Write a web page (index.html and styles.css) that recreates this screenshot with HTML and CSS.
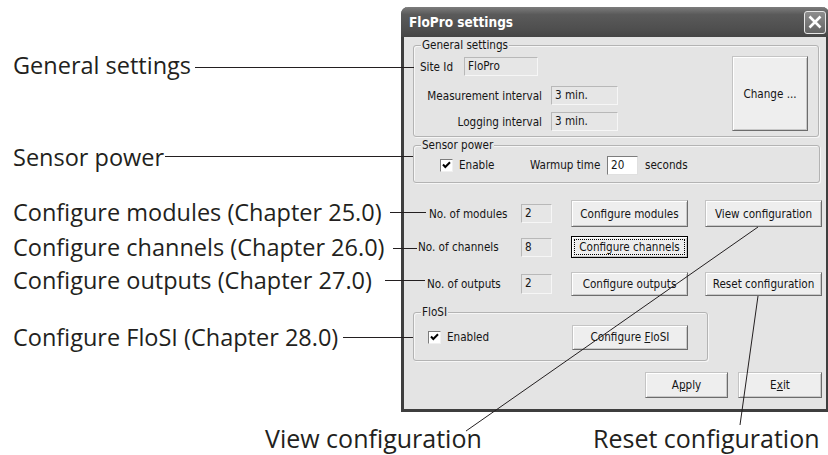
FILE: index.html
```html
<!DOCTYPE html>
<html lang="en">
  <head>
    <meta charset="UTF-8" />
    <title>FloPro settings</title>
    <link rel="stylesheet" href="styles.css">
  </head>
  <body>
    <div class="figure">
      <!-- FloPro settings dialog -->
      <div class="dialog">
        <div class="titlebar">
          <span>FloPro settings</span>
          <span class="close">
            <svg width="16" height="16" viewBox="0 0 16 16">
              <path d="M2.5 2.5 L13.5 13.5 M13.5 2.5 L2.5 13.5" stroke="#fff" stroke-width="2.6" />
            </svg>
          </span>
        </div>

        <div class="content">
          <div class="group general">
            <span class="legend">General settings</span>
            <div class="general-fields">
              <div class="site-row">
                <span class="site-lbl">Site Id</span>
                <span class="field site-field">FloPro</span>
              </div>
              <div class="interval-row first">
                <span class="interval-lbl">Measurement interval</span>
                <span class="field interval-field">3 min.</span>
              </div>
              <div class="interval-row">
                <span class="interval-lbl">Logging interval</span>
                <span class="field interval-field">3 min.</span>
              </div>
            </div>
            <button class="btn change">Change ...</button>
          </div>

          <div class="group sensor">
            <span class="legend">Sensor power</span>
            <span class="check">
              <svg width="13" height="13" viewBox="0 0 13 13">
                <path d="M3 5.5 L5.3 8 L10 3.2" stroke="#000" stroke-width="2" fill="none" />
              </svg>
            </span>
            <span class="enable-lbl">Enable</span>
            <span class="warmup-lbl">Warmup time</span>
            <span class="edit">20</span>
            <span class="seconds">seconds</span>
          </div>

          <div class="row modules">
            <span class="num-lbl">No. of modules</span>
            <span class="field num">2</span>
            <button class="btn cfg">Configure modules</button>
            <button class="btn side">View configuration</button>
          </div>
          <div class="row channels">
            <span class="num-lbl">No. of channels</span>
            <span class="field num">8</span>
            <button class="btn cfg focus"><span class="focus-ring">Configure channels</span></button>
          </div>
          <div class="row outputs">
            <span class="num-lbl">No. of outputs</span>
            <span class="field num">2</span>
            <button class="btn cfg">Configure outputs</button>
            <button class="btn side">Reset configuration</button>
          </div>

          <div class="group flosi">
            <span class="legend">FloSI</span>
            <span class="check">
              <svg width="13" height="13" viewBox="0 0 13 13">
                <path d="M3 5.5 L5.3 8 L10 3.2" stroke="#000" stroke-width="2" fill="none" />
              </svg>
            </span>
            <span class="enabled-lbl">Enabled</span>
            <button class="btn flosi-btn">Configure <u>F</u>loSI</button>
          </div>

          <div class="actions">
            <button class="btn apply">A<u>p</u>ply</button>
            <button class="btn exit">E<u>x</u>it</button>
          </div>
        </div>
      </div>

      <!-- callout leader lines -->
      <svg class="leaders" width="828" height="455">
        <g stroke="#231f20" stroke-width="1" shape-rendering="crispEdges">
          <line x1="195" y1="67.5" x2="414" y2="67.5" />
          <line x1="165" y1="156.5" x2="413" y2="156.5" />
          <line x1="390" y1="212.5" x2="426" y2="212.5" />
          <line x1="393" y1="248.5" x2="417" y2="248.5" />
          <line x1="385" y1="280.5" x2="425" y2="280.5" />
          <line x1="343" y1="337.5" x2="413" y2="337.5" />
        </g>
        <g stroke="#231f20" stroke-width="1">
          <line x1="758" y1="227" x2="466" y2="431" />
          <line x1="758" y1="296" x2="740" y2="425" />
        </g>
      </svg>

      <div class="callout c-general">General settings</div>
      <div class="callout c-sensor">Sensor power</div>
      <div class="callout c-modules">Configure modules (Chapter 25.0)</div>
      <div class="callout c-channels">Configure channels (Chapter 26.0)</div>
      <div class="callout c-outputs">Configure outputs (Chapter 27.0)</div>
      <div class="callout c-flosi">Configure FloSI (Chapter 28.0)</div>
      <div class="callout c-view">View configuration</div>
      <div class="callout c-reset">Reset configuration</div>
    </div>
  </body>
</html>
```

FILE: styles.css
```css
body {
  margin: 0;
  background-color: #fff;
  overflow: hidden;
}
.figure {
  position: relative;
  width: 828px;
  height: 455px;
  overflow: hidden;
}

/* dialog */
.dialog {
  margin: 7px 0 0 401px;
  width: 428px;
  height: 405px;
  box-sizing: border-box;
  border: 3px solid #3e3e3e;
  border-top: 0;
  border-radius: 7px 7px 0 0;
  background-color: #e4e4e4;
  font-family: "DejaVu Sans Condensed", "Liberation Sans", sans-serif;
  font-size: 11.6px;
  color: #151515;
}
.titlebar {
  height: 30px;
  margin: 0 -3px;
  padding: 0 3px 0 8px;
  display: flex;
  align-items: center;
  justify-content: space-between;
  background: linear-gradient(#7c7c7c, #5a5a5a 25%, #4d4d4d 80%, #454545);
  border-radius: 7px 7px 0 0;
  color: #fff;
  font-size: 13.5px;
  font-weight: bold;
}
.close {
  width: 22px;
  height: 23px;
  box-sizing: border-box;
  border: 1px solid #e6e6e6;
  border-radius: 3px;
  background: linear-gradient(#8e8e8e, #646464);
  display: flex;
  align-items: center;
  justify-content: center;
}
.content {
  padding: 8px 0 0 9px;
}

/* group boxes */
.group {
  position: relative;
  box-sizing: border-box;
  border: 1px solid #b3b3b3;
  border-radius: 3px;
  box-shadow: inset 1px 1px 0 #f6f6f6, 1px 1px 0 #f6f6f6;
}
.legend {
  position: absolute;
  top: -8px;
  left: 7px;
  padding: 0 1px;
  line-height: 14px;
  background-color: #e4e4e4;
}

/* fields and buttons */
.field {
  display: inline-block;
  box-sizing: border-box;
  height: 19px;
  line-height: 17px;
  padding-left: 3px;
  border: 1px solid;
  border-color: #b8b8b8 #f6f6f6 #f6f6f6 #b8b8b8;
  background-color: #e6e6e6;
}
.edit {
  display: inline-block;
  box-sizing: border-box;
  width: 31px;
  height: 19px;
  line-height: 17px;
  padding-left: 3px;
  border: 1px solid;
  border-color: #7d7d7d #e0e0e0 #e0e0e0 #7d7d7d;
  background-color: #fff;
}
.btn {
  box-sizing: border-box;
  margin: 0;
  padding: 0;
  font: inherit;
  color: inherit;
  background-color: #eeeeee;
  border: 1px solid;
  border-color: #c4c4c4 #6c6c6c #6c6c6c #c4c4c4;
  box-shadow: inset 1px 1px 0 #fff, inset -1px -1px 0 #c8c8c8;
}
.btn.focus {
  border-color: #000;
  padding: 2px;
}
.focus-ring {
  display: block;
  height: 100%;
  line-height: 16px;
  outline: 1px dotted #000;
  outline-offset: -1px;
}
.check {
  display: inline-block;
  width: 13px;
  height: 13px;
  box-sizing: border-box;
  border: 1px solid;
  border-color: #7c7c7c #f0f0f0 #f0f0f0 #7c7c7c;
  background-color: #fff;
  margin-right: 6px;
}
.check svg {
  display: block;
  margin: -1px;
}

/* general settings */
.general {
  width: 406px;
  height: 92px;
  display: flex;
  justify-content: space-between;
  padding: 10px 10px 0 6px;
}
.site-row {
  margin-top: 1px;
  display: flex;
  align-items: center;
}
.site-lbl {
  width: 44px;
}
.site-field {
  width: 74px;
}
.interval-row {
  margin-top: 7px;
  display: flex;
  align-items: center;
}
.interval-row.first {
  margin-top: 10px;
}
.interval-lbl {
  width: 131px;
  box-sizing: border-box;
  padding-right: 9px;
  text-align: right;
}
.interval-field {
  width: 67px;
}
.change {
  width: 76px;
  height: 75px;
}

/* sensor power */
.sensor {
  width: 407px;
  height: 38px;
  margin-top: 8px;
  padding: 2px 0 0 26px;
  display: flex;
  align-items: center;
}
.enable-lbl {
  width: 71px;
}
.warmup-lbl {
  width: 77px;
}
.seconds {
  margin-left: 7px;
}

/* module / channel / output rows */
.row {
  display: flex;
  align-items: center;
}
.row.modules {
  margin-top: 17px;
  height: 27px;
}
.row.channels {
  margin-top: 9px;
  height: 22px;
}
.row.outputs {
  margin-top: 14px;
  height: 24px;
}
.num-lbl {
  width: 108px;
  box-sizing: border-box;
  white-space: nowrap;
}
.modules .num-lbl {
  padding-left: 16px;
}
.channels .num-lbl {
  padding-left: 5px;
}
.outputs .num-lbl {
  padding-left: 14px;
}
.num {
  width: 31px;
}
.outputs .num {
  height: 20px;
}
.cfg {
  margin-left: 19px;
  width: 117px;
  height: 100%;
}
.side {
  margin-left: 17px;
  width: 117px;
  height: 100%;
}

/* flosi */
.flosi {
  width: 295px;
  height: 49px;
  margin-top: 16px;
  padding: 1px 0 0 14px;
  display: flex;
  align-items: center;
}
.enabled-lbl {
  width: 125px;
}
.flosi-btn {
  width: 116px;
  height: 25px;
}

/* bottom buttons */
.actions {
  margin-top: 11px;
  padding-right: 4px;
  display: flex;
  justify-content: flex-end;
  gap: 10px;
}
.apply {
  width: 83px;
  height: 26px;
}
.exit {
  width: 84px;
  height: 26px;
}

/* callouts */
.leaders {
  position: absolute;
  left: 0;
  top: 0;
  pointer-events: none;
}
.callout {
  position: absolute;
  left: 13px;
  font-family: "Open Sans", "Noto Sans", sans-serif;
  font-size: 23.5px;
  line-height: 28px;
  color: #231f20;
  white-space: nowrap;
}
.c-general {
  top: 51px;
}
.c-sensor {
  top: 143px;
}
.c-modules {
  top: 198px;
}
.c-channels {
  top: 233px;
}
.c-outputs {
  top: 266px;
}
.c-flosi {
  top: 323px;
}
.c-view,
.c-reset {
  top: 423px;
  font-size: 25px;
  line-height: 30px;
}
.c-view {
  left: 265px;
}
.c-reset {
  left: 593px;
}
```
